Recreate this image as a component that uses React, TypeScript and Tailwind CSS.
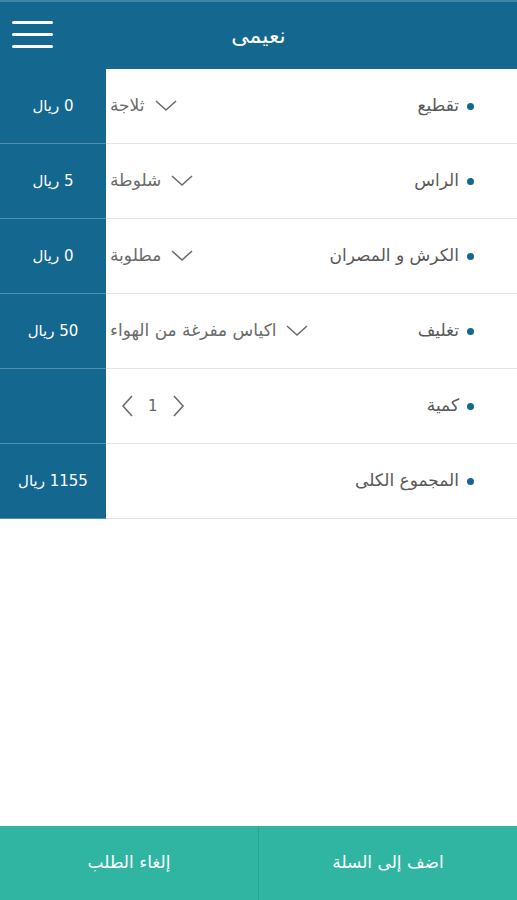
import React from "react";

// شاشة تفاصيل الطلب: رأس أزرق، صفوف خيارات، وشريط أزرار سفلي
const ROWS = [
  { label: "تقطيع", value: "ثلاجة", price: "0 ريال" },
  { label: "الراس", value: "شلوطة", price: "5 ريال" },
  { label: "الكرش و المصران", value: "مطلوبة", price: "0 ريال" },
  { label: "تغليف", value: "اكياس مفرغة من الهواء", price: "50 ريال" },
];

function Chevron({ dir }: { dir: "down" | "left" | "right" }) {
  const d =
    dir === "down" ? "M1 5 L11 14 L21 5" : dir === "left" ? "M12 2 L3 12 L12 22" : "M3 2 L12 12 L3 22";
  const w = dir === "down" ? 22 : 15;
  const h = dir === "down" ? 20 : 24;
  return (
    <svg width={w} height={h} viewBox={`0 0 ${w} ${h}`} fill="none" stroke="#6b6b6b" strokeWidth={1.6}>
      <path d={d} />
    </svg>
  );
}

function Label({ text }: { text: string }) {
  return (
    <div className="flex items-center gap-[8px]">
      <span className="h-[7px] w-[7px] rounded-full bg-[#14678f]" />
      <span className="text-[17px] text-[#585858]">{text}</span>
    </div>
  );
}

function Row({ price, children }: { price?: string; children: React.ReactNode }) {
  return (
    <div className="flex h-[75px]">
      <div className="flex w-[106px] shrink-0 items-center justify-center border-b border-[#4f8fb0] bg-[#14678f] text-[15px] text-white">
        {price && <span dir="rtl">{price}</span>}
      </div>
      <div dir="rtl" className="flex flex-1 items-center justify-between border-b border-[#e4e4e4] pl-[4px] pr-[43px]">
        {children}
      </div>
    </div>
  );
}

export default function App() {
  return (
    <div className="flex h-[900px] w-[517px] flex-col bg-white font-['DejaVu_Sans',sans-serif]">
      <header className="relative flex h-[69px] shrink-0 items-center justify-center border-t-2 border-[#3d86a8] bg-[#14678f]">
        <div className="absolute left-[12px] top-[19px] flex flex-col gap-[9px]">
          <span className="block h-[3px] w-[41px] rounded bg-white" />
          <span className="block h-[3px] w-[41px] rounded bg-white" />
          <span className="block h-[3px] w-[41px] rounded bg-white" />
        </div>
        <h1 className="text-[22px] text-white">نعيمى</h1>
      </header>

      {ROWS.map((r) => (
        <Row key={r.label} price={r.price}>
          <Label text={r.label} />
          <div className="flex items-center gap-[10px]">
            <Chevron dir="down" />
            <span className="text-[17px] text-[#6a6a6a]">{r.value}</span>
          </div>
        </Row>
      ))}

      <Row>
        <Label text="كمية" />
        <div dir="ltr" className="ml-[10px] flex items-center gap-[13px]">
          <Chevron dir="left" />
          <span className="text-[15px] text-[#666]">1</span>
          <Chevron dir="right" />
        </div>
      </Row>

      <Row price="1155 ريال">
        <Label text="المجموع الكلى" />
      </Row>

      <div className="flex-1" />

      <footer dir="rtl" className="flex h-[74px] shrink-0 bg-[#30b5a3] text-[17px] text-white">
        <button className="flex flex-1 items-center justify-center border-l border-[#2aa493]">اضف إلى السلة</button>
        <button className="flex flex-1 items-center justify-center">إلغاء الطلب</button>
      </footer>
    </div>
  );
}
